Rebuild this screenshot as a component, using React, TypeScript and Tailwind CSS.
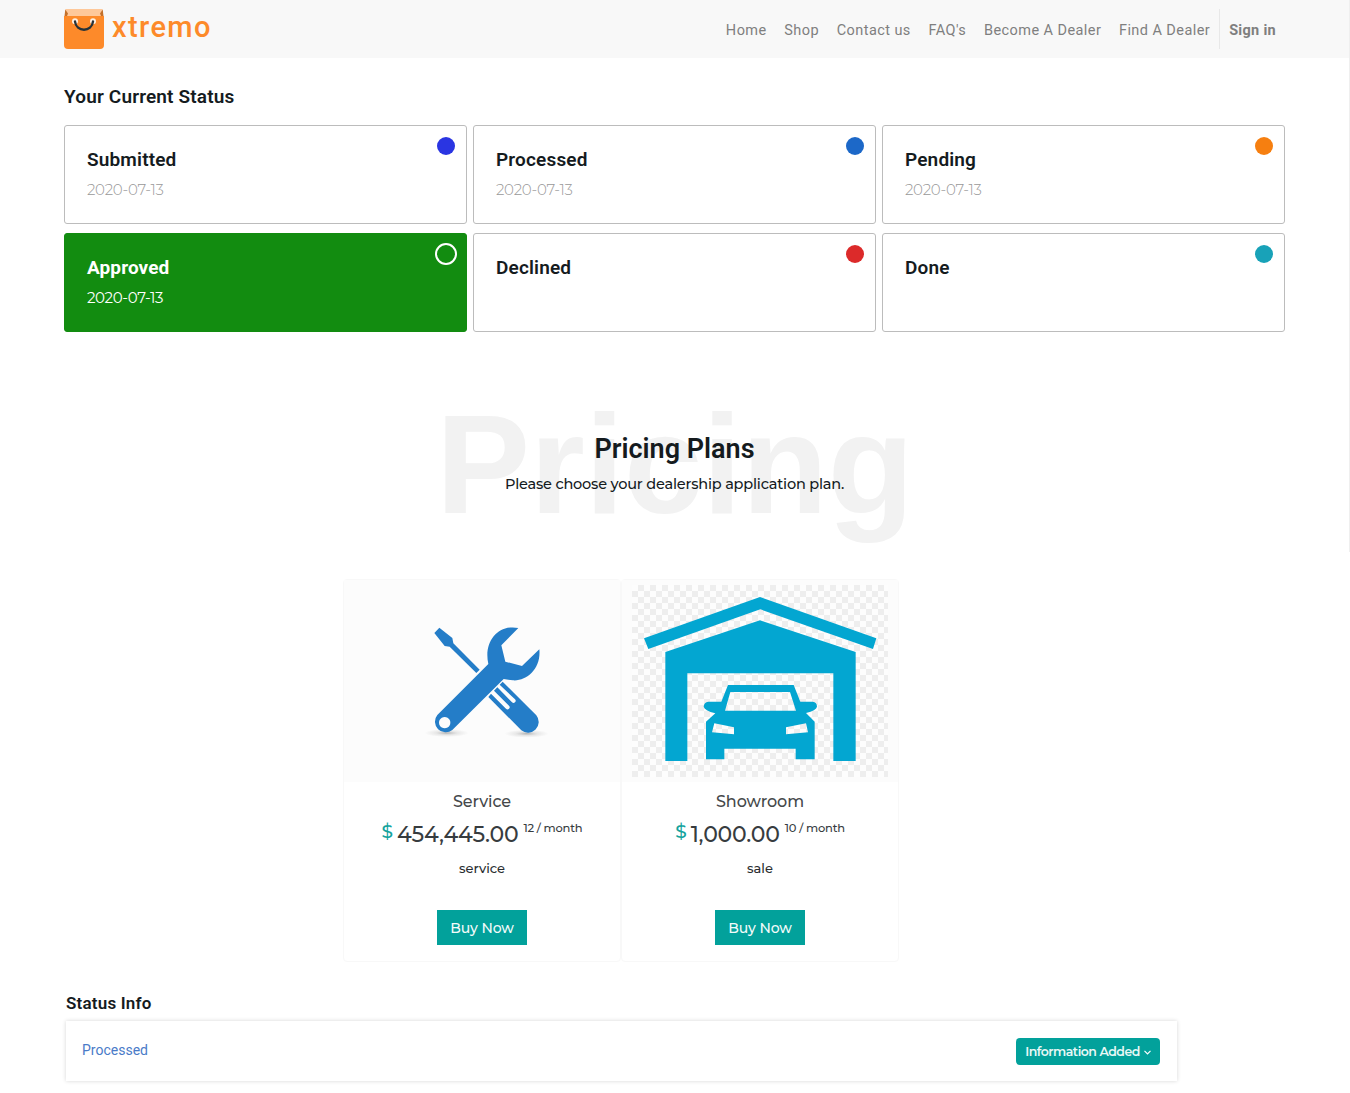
import React from "react";

const NAV = ["Home", "Shop", "Contact us", "FAQ's", "Become A Dealer", "Find A Dealer"];

type Status = { name: string; date?: string; dot: string; active?: boolean };

const STATUSES: Status[] = [
  { name: "Submitted", date: "2020-07-13", dot: "bg-[#2a35e2]" },
  { name: "Processed", date: "2020-07-13", dot: "bg-[#1c68c8]" },
  { name: "Pending", date: "2020-07-13", dot: "bg-[#f67f10]" },
  { name: "Approved", date: "2020-07-13", dot: "", active: true },
  { name: "Declined", dot: "bg-[#dc2a2a]" },
  { name: "Done", dot: "bg-[#18a2b8]" },
];

function BagLogo() {
  return (
    <svg width="40" height="40" viewBox="0 0 40 40">
      <path d="M1.500 0h37v8h-37z" fill="#fec89a" />
      <path d="M1.300 0.500L4 4.500L3 7H0.500zM38.700 0.500L36 4.500L37 7H39.500z" fill="#c4702a" />
      <path d="M0 7h40v29a4 4 0 0 1-4 4H4a4 4 0 0 1-4-4z" fill="#fd8a2a" />
      <circle cx="11" cy="12.300" r="3" fill="#fdeee0" />
      <circle cx="29" cy="12.300" r="3" fill="#fdeee0" />
      <path d="M11 12.500c1 11 17 11 18 0" fill="none" stroke="#263238" strokeWidth="2.400" strokeLinecap="round" />
    </svg>
  );
}

function ToolsPicture() {
  return (
    <svg width="256" height="192" viewBox="-168 -45 768 576">
      <defs>
        <radialGradient id="shade">
          <stop offset="0" stopColor="#777" stopOpacity="0.550" />
          <stop offset="0.500" stopColor="#999" stopOpacity="0.200" />
          <stop offset="1" stopColor="#999" stopOpacity="0" />
        </radialGradient>
      </defs>
      <ellipse cx="110" cy="399" rx="66" ry="12" fill="url(#shade)" />
      <ellipse cx="350" cy="401" rx="66" ry="12" fill="url(#shade)" />
      <g fill="#247dc8">
        <path d="M88 83L127 114L130 130L209 209L199 219L119 140L104 138L73 99Z" />
        <path d="M278 245L379 346A32 32 0 0 1 334 391L235 291L243 281L288 326A6 6 0 0 0 297 317L252 272L262 262L306 307A6 6 0 0 0 315 298L269 254Z" />
        <path
          fillRule="evenodd"
          d="M325 84L274 136L286 185L336 198L388 148C394 205 351 244 309 241Q294 240 281 237L127 390A32 32 0 0 1 82 345L235 192C220 125 264 72 325 84ZM104 351a17 17 0 1 0 .1 0Z"
        />
      </g>
    </svg>
  );
}

function GaragePicture() {
  return (
    <svg width="256" height="192" viewBox="66 45 768 576">
      <defs>
        <pattern id="checker" x="66" y="45" width="36" height="36" patternUnits="userSpaceOnUse">
          <path d="M0 0h36v36H0z" fill="#fdfdfd" />
          <path d="M18 0h18v18H18zM0 18h18v18H0z" fill="#eeeeee" />
        </pattern>
      </defs>
      <path d="M66 45h768v576H66z" fill="url(#checker)" />
      <g fill="#03a6d1">
        <path d="M450 81L799 205L789 237L451 118L115 237L102 205Z" />
        <path d="M450 151L737 246V573H670V310H232V573H166V246Z" />
        <path
          fillRule="evenodd"
          d="M354 345H551L571 395H608Q621 396 621 410Q619 421 588 429L614 455V568H557V536H343V568H288V455L316 430Q283 421 281 410Q282 396 295 395H334ZM361 366L345 422H558L540 366ZM313 460L306 487L372 493V472ZM588 460L594 487L528 493V472Z"
        />
      </g>
    </svg>
  );
}

type Plan = {
  title: string;
  price: string;
  term: string;
  kind: string;
  picture: React.ReactNode;
};

const PLANS: Plan[] = [
  { title: "Service", price: "454,445.00", term: "12 / month", kind: "service", picture: <ToolsPicture /> },
  { title: "Showroom", price: "1,000.00", term: "10 / month", kind: "sale", picture: <GaragePicture /> },
];

function StatusCard({ s }: { s: Status }) {
  return (
    <div
      className={
        s.active
          ? "flex h-[99px] justify-between rounded-[3px] border border-[#128c10] bg-[#128c10] pl-[22px] text-white"
          : "flex h-[99px] justify-between rounded-[3px] border border-[#bcbcbc] pl-[22px] text-[#151b1e]"
      }
    >
      <div className="pt-[22px]">
        <h3
          className={
            s.active
              ? "font-[Roboto] text-[19px] leading-6 font-bold tracking-[0.100px]"
              : "font-[Roboto] text-[19px] leading-6 font-semibold tracking-[0.160px]"
          }
        >
          {s.name}
        </h3>
        {s.date && (
          <p
            className={
              s.active
                ? "mt-[7px] text-[15px] leading-[22px] font-normal tracking-[-0.400px]"
                : "mt-[7px] text-[15px] leading-[22px] font-light tracking-[-0.280px] text-[#999]"
            }
          >
            {s.date}
          </p>
        )}
      </div>
      {s.active ? (
        <span className="mt-[9px] mr-[9px] size-[22px] rounded-full border-2 border-white" />
      ) : (
        <span className={"mt-[11px] mr-[11px] size-[18px] rounded-full " + s.dot} />
      )}
    </div>
  );
}

function PlanCard({ p }: { p: Plan }) {
  return (
    <div className="flex h-[383px] w-[278px] flex-col items-center rounded-[4px] border border-[#f8f8f8]">
      <div className="flex h-[202px] w-full justify-center bg-[#fcfcfc] pt-[5px]">{p.picture}</div>
      <h4 className="mt-[8px] text-[16px] leading-6 font-medium tracking-[-0.100px] text-[#45484a]">{p.title}</h4>
      <div className="mt-[6px] flex h-7 items-start text-[#373c3f]">
        <span className="mr-1 text-[18.500px] leading-6 font-medium text-[#14a39d]">$</span>
        <span className="mt-px text-[22px] leading-7 font-medium tracking-[-0.200px]">{p.price}</span>
        <span className="ml-[5px] text-[11.500px] leading-4 font-medium tracking-[-0.200px]">{p.term}</span>
      </div>
      <p className="mt-[10px] text-[13px] leading-5 font-medium text-[#2a2d30]">{p.kind}</p>
      <button className="mt-[32px] h-[35px] w-[90px] bg-[#02a19b] pt-[2px] text-[14px] font-medium tracking-[-0.100px] text-[#f2fbfa]">
        Buy Now
      </button>
    </div>
  );
}

export default function App() {
  return (
    <div className="flex h-[1093px] w-[1350px] items-start overflow-hidden bg-white font-[Montserrat,Inter,sans-serif]">
      <div className="w-[1349px]">
        <header className="flex h-[58px] justify-between bg-[#f8f8f8] pr-[73px] pl-16">
          <div className="flex pt-[9px]">
            <BagLogo />
            <span className="ml-2 font-[Roboto] text-[29px] leading-9 font-medium tracking-[1.400px] text-[#fd8a2a]">xtremo</span>
          </div>
          <nav className="flex h-[58px] items-center pt-[3px] font-[Roboto] text-[14.500px] tracking-[0.430px] text-[#7f7f7f]">
            {NAV.map((n) => (
              <a key={n} className="mr-[17.700px] last-of-type:mr-0">
                {n}
              </a>
            ))}
            <span className="-mt-[3px] ml-[9px] flex h-[40px] items-center border-l border-[#e8e8e8] pt-[3px] pl-[9px] font-bold tracking-[0.300px]">
              Sign in
            </span>
          </nav>
        </header>

        <section className="mx-16">
          <h2 className="pt-[27px] font-[Roboto] text-[19px] leading-6 font-semibold tracking-[0.160px] text-[#151b1e]">
            Your Current Status
          </h2>
          <div className="mt-[16px] grid grid-cols-[403px_403px_403px] gap-x-[6px] gap-y-[9px]">
            {STATUSES.map((s) => (
              <StatusCard key={s.name} s={s} />
            ))}
          </div>
        </section>

        <section className="relative mt-[46px] h-[201px] text-center text-[#151b1e]">
          <div className="absolute inset-x-0 top-[4px] pl-px font-['Liberation_Sans'] text-[141px] leading-[164px] font-bold text-[#f2f2f2]">
            Pricing
          </div>
          <div className="relative pt-[53px]">
            <h1 className="font-[Roboto] text-[27px] leading-9 font-semibold">Pricing Plans</h1>
            <p className="mt-[5px] text-[14.500px] leading-6 font-medium tracking-[-0.200px]">
              Please choose your dealership application plan.
            </p>
          </div>
        </section>

        <section className="ml-[343px] flex">
          {PLANS.map((p) => (
            <PlanCard key={p.title} p={p} />
          ))}
        </section>

        <section className="mt-[29px] ml-[66px] w-[1111px]">
          <h2 className="font-[Roboto] text-[17px] leading-6 font-semibold tracking-[0.200px] text-[#151b1e]">Status Info</h2>
          <div className="mt-[6px] flex h-[60px] items-center justify-between bg-white pr-[17px] pl-4 shadow-[0_0_4px_rgba(0,0,0,0.170)]">
            <span className="-mt-px font-[Roboto] text-[14px] text-[#4a7bc8]">Processed</span>
            <button className="flex h-[27px] w-[144px] items-center justify-center gap-1 rounded-[4px] bg-[#02a19b] pt-[2px] text-[12.500px] font-semibold tracking-[-0.480px] whitespace-nowrap text-[#e8f8f6]">
              Information Added
              <svg width="7" height="5" viewBox="0 0 7 5" fill="none" stroke="white" strokeWidth="1.200">
                <path d="M.5 .8l3 3 3-3" />
              </svg>
            </button>
          </div>
        </section>
      </div>
      <div className="h-[552px] w-px bg-[#efefef]" />
    </div>
  );
}
